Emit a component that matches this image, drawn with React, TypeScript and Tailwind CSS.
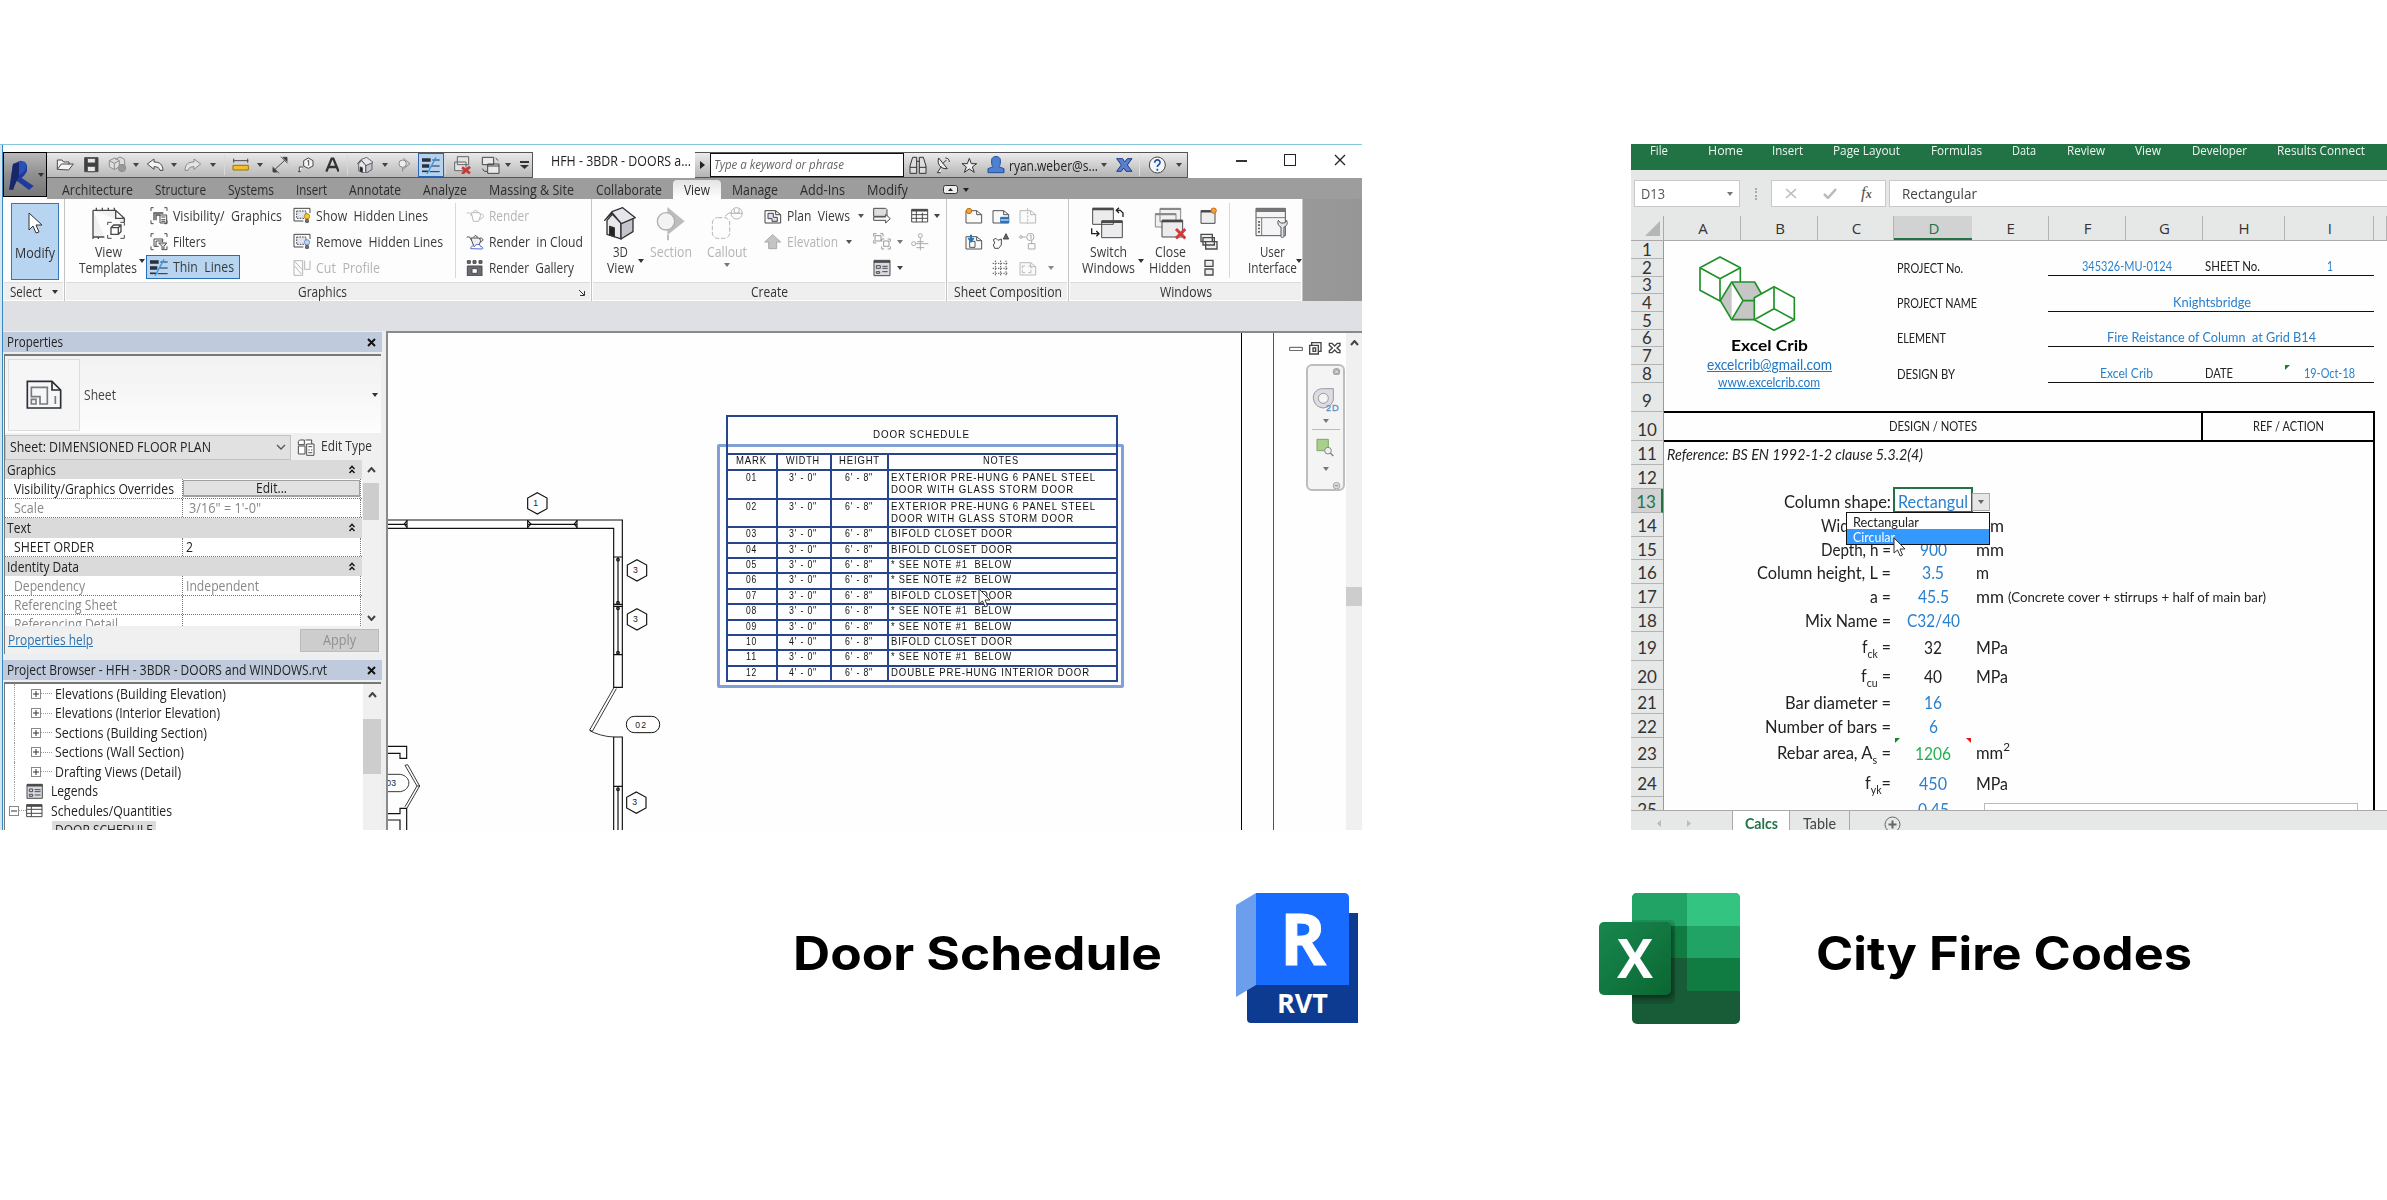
import React, { useLayoutEffect, useRef, useState } from "react";

type Kids = { children?: React.ReactNode };

/* Text stretched or condensed to a fixed width */
function Fit({ w, className = "", children }: { w: number; className?: string } & Kids) {
  const ref = useRef<HTMLSpanElement>(null);
  const [k, setK] = useState(1);
  useLayoutEffect(() => {
    if (ref.current) setK(w / ref.current.getBoundingClientRect().width);
  }, [w]);
  return (
    <span className={"inline-block shrink-0 whitespace-pre text-left " + className} style={{ width: w }}>
      <span ref={ref} className="inline-block origin-left" style={{ transform: k === 1 ? undefined : `scaleX(${k})` }}>
        {children}
      </span>
    </span>
  );
}

/* Icon drawn on a grid of three units per pixel */
function Ico({ x, y, w, h, s = "#4a4a4a", sw = 3, className = "", children }: { x: number; y: number; w: number; h: number; s?: string; sw?: number; className?: string } & Kids) {
  return (
    <svg className={"shrink-0 " + className} width={w / 3} height={h / 3} viewBox={`${x} ${y} ${w} ${h}`} fill="none" stroke={s} strokeWidth={sw}>
      {children}
    </svg>
  );
}

function Caret({ className = "text-[#444]" }: { className?: string }) {
  return (
    <svg className={"shrink-0 " + className} width="6" height="4" viewBox="0 0 6 4">
      <path d="M0 0h6L3 4z" fill="currentColor" />
    </svg>
  );
}

function Slot({ className, children }: { className: string } & Kids) {
  return <div className={"flex h-full shrink-0 items-center justify-center " + className}>{children}</div>;
}

const ThinIcon = () => (
  <Ico x={453} y={357} w={54} h={51}>
    <path d="M453 366h26M453 384h22" stroke="#2b2f3a" strokeWidth="10" />
    <path d="M453 400h18" stroke="#2b2f3a" strokeWidth="5" />
    <path d="M484 366h22M480 384h26M476 401h30" stroke="#2b2f3a" />
    <path d="M495 358L468 408" stroke="#3d94e0" strokeWidth="4" />
  </Ico>
);
const HouseIcon = ({ w = 48, h = 48 }) => (
  <svg className="shrink-0" width={w / 3} height={h / 3} viewBox="463 200 96 98" stroke="#333" strokeWidth="4" strokeLinejoin="round">
    <path d="M472 240v42l42 14v-48l-26-26z" fill="#e8e8ec" />
    <path d="M514 248l36-16v42l-36 22z" fill="#c4c4cc" />
    <path d="M465 240l22-26 32-12 38 30-42 18-27-32z" fill="#e4e6ec" />
    <path d="M480 258v26l14 5v-26z" fill="#222" />
  </svg>
);
const RedX = () => <path d="M1390 84l24 18M1414 82l-24 22" stroke="#c93838" strokeWidth="8" />;

function AppButton() {
  return (
    <div className="flex h-[45px] w-[44px] shrink-0 items-center border border-black bg-linear-to-b from-[#b9b9b9] via-[#8f8f8f] to-[#777]">
      <Ico x={24} y={46} w={76} h={90} s="none" className="ml-[5px]">
        <path d="M36 58l22-10 14 4 6 10v18l-8 12-8 8 36 24-14 12-40-30-8 32-12-2z" fill="#1f3a9a" />
        <path d="M36 58l18-4v40L36 134l-10-2z" fill="#16276b" />
        <path d="M54 50l18 2 4 14-6 14-16 12z" fill="#2a50bb" />
      </Ico>
      <Caret className="ml-[4px] text-[#333]" />
    </div>
  );
}

function QuickAccess() {
  return (
    <div className="flex h-[26px] w-[486px] shrink-0 items-center border-y border-r border-[#555] bg-linear-to-b from-[#e9e9e9] to-[#b9b9b9] pl-[4px]">
      <Slot className="w-[28px]">
        <Ico x={168} y={54} w={56} h={40}><path d="M172 88V60h14l5 6h16v8M172 88l12-16h36l-14 18z" fill="#f4f4f4" /></Ico>
      </Slot>
      <Slot className="w-[25px]">
        <Ico x={252} y={50} w={46} h={46}><path d="M254 52h40v42h-40z" fill="#3f3f3f" /><path d="M262 54h24v14h-24zM262 78h24v16h-24z" fill="#e8e8e8" /></Ico>
      </Slot>
      <Slot className="w-[26px]">
        <Ico x={324} y={48} w={56} h={52} s="#8d8d8d"><path d="M328 62l16-8 14 8v18l-15 9-15-9zM346 58l14-7 14 7v20M343 70v18M328 62l15 8 15-8" fill="#ddd" /><circle cx="366" cy="84" r="11" fill="#999" /></Ico>
      </Slot>
      <Slot className="w-[11px]"><Caret /></Slot>
      <Slot className="w-[28px]">
        <Ico x={440} y={52} w={54} h={40}><path d="M444 70l20-15v9c18 0 26 8 27 25h-9c-2-8-8-11-18-11v8z" fill="#f3f3f3" /></Ico>
      </Slot>
      <Slot className="w-[10px]"><Caret /></Slot>
      <Slot className="w-[28px]">
        <Ico x={556} y={52} w={54} h={40} s="#888"><path d="M606 70l-20-15v9c-18 0-26 8-27 25h9c2-8 8-11 18-11v8z" fill="#e4e4e4" /></Ico>
      </Slot>
      <Slot className="w-[12px]"><Caret /></Slot>
      <div className="mx-[5px] h-[20px] w-px shrink-0 bg-[#d8d8d8]" />
      <Slot className="w-[22px]">
        <Ico x={697} y={54} w={52} h={42}><path d="M700 62h46M702 56v12M744 56v12" /><path d="M700 76h46v14h-46z" fill="#f0c02c" stroke="#9a7400" /></Ico>
      </Slot>
      <Slot className="w-[16px]"><Caret /></Slot>
      <Slot className="w-[24px]">
        <Ico x={814} y={48} w={54} h={54}><path d="M822 92l36-34M818 80l20 20M844 50l20 20" /><path d="M820 96v-12l12 12zM862 52v12l-12-12z" fill="#333" /></Ico>
      </Slot>
      <Slot className="w-[28px]">
        <Ico x={896} y={50} w={48} h={48}><path d="M927 53l14 8v16l-14 7-14-7V61zM912 80h-12v14M896 94h8" fill="#f3f3f3" /><path d="M924 62l4-2v16" /></Ico>
      </Slot>
      <Slot className="w-[24px]">
        <Ico x={974} y={52} w={44} h={46}><path d="M978 96l16-39h5l16 39M984 82h24" strokeWidth="7" stroke="#333" /></Ico>
      </Slot>
      <div className="mx-[3px] h-[20px] w-px shrink-0 bg-[#d8d8d8]" />
      <Slot className="w-[28px]"><HouseIcon w={50} h={50} /></Slot>
      <Slot className="w-[11px]"><Caret /></Slot>
      <Slot className="w-[28px]">
        <Ico x={1186} y={52} w={48} h={46} s="#888"><circle cx="1206" cy="72" r="11" fill="#eee" /><path d="M1208 56l20 16-20 16M1206 84v12" /></Ico>
      </Slot>
      <div className="flex h-[24px] w-[26px] shrink-0 items-center justify-center border border-[#2a64b4] bg-[#b5d3f0]"><ThinIcon /></div>
      <div className="mx-px h-[20px] w-px shrink-0 bg-[#d8d8d8]" />
      <Slot className="w-[32px]">
        <Ico x={1366} y={50} w={54} h={54} s="#666"><path d="M1376 52h34v24h-34zM1368 68h34v26h-34z" fill="#e3e3e3" /><RedX /></Ico>
      </Slot>
      <Slot className="w-[23px]">
        <Ico x={1442} y={48} w={58} h={54} s="#444"><path d="M1446 52h34v22h-34zM1462 72h34v28h-34zM1462 78h34" fill="#e9e9e9" /><path d="M1486 54l8 8M1446 86l6 8h8" /></Ico>
      </Slot>
      <Slot className="w-[11px]"><Caret /></Slot>
      <Slot className="w-[22px]">
        <svg width="9" height="8" viewBox="0 0 9 8"><path d="M0 0h9v2H0zM0 4h9L4.500 8z" fill="#333" /></svg>
      </Slot>
    </div>
  );
}

function InfoCenter() {
  return (
    <div className="flex h-[26px] w-[493px] shrink-0 items-center border-y border-r border-[#555] bg-linear-to-b from-[#ececec] to-[#b3b3b3]">
      <Slot className="w-[15px]"><svg width="5" height="8" viewBox="0 0 5 8"><path d="M0 0l5 4-5 4z" fill="#222" /></svg></Slot>
      <div className="flex h-[24px] w-[194px] shrink-0 items-center border border-[#111] bg-white pl-[3px] text-[13px] italic text-[#666]">
        <Fit w={130}>Type a keyword or phrase</Fit>
      </div>
      <Slot className="w-[27px]">
        <Ico x={1374} y={50} w={54} h={54} s="#333"><path d="M1377 102V80l8-26h12v48zM1405 102V54h12l8 26v22zM1397 66h8M1377 84h20M1405 84h20" fill="#ddd" /></Ico>
      </Slot>
      <Slot className="w-[25px]">
        <Ico x={104} y={50} w={48} h={54} s="#333"><path d="M112 56c-6 18 6 34 26 32zM118 100h-10l12-18M125 72l10-10M132 56c8 0 12 5 12 12" fill="#eee" /></Ico>
      </Slot>
      <Slot className="w-[26px]">
        <Ico x={180} y={54} w={50} h={48} s="#333"><path d="M205 58l6 16h16l-13 10 6 16-15-10-15 10 6-16-13-10h16z" fill="#eee" /></Ico>
      </Slot>
      <Slot className="w-[27px]">
        <Ico x={258} y={50} w={54} h={52} s="#1f4fa0"><path d="M272 62c0-14 26-14 26 0v10c0 5-3 8-5 10l16 6v12h-48V88l16-6c-3-2-5-5-5-10z" fill="#4e82d0" /></Ico>
      </Slot>
      <Fit w={89} className="text-[14px] text-[#222]">ryan.weber@s...</Fit>
      <Slot className="w-[12px]"><Caret /></Slot>
      <Slot className="w-[29px]">
        <Ico x={648} y={56} w={50} h={42} s="#1d3b8c"><path d="M650 58h18l6 10 8-10h14l-14 19 14 19h-18l-7-10-7 10h-14l14-19z" fill="#5b80cb" /></Ico>
      </Slot>
      <div className="h-[22px] w-px bg-[#ddd]" />
      <Slot className="w-[35px]">
        <Ico x={758} y={50} w={56} h={54} s="#444"><circle cx="786" cy="77" r="24" fill="#f3f6fb" /><path d="M778 70c0-12 17-10 16 0-1 7-8 7-8 13M786 88v6" stroke="#23509f" strokeWidth="5" /></Ico>
      </Slot>
      <Slot className="w-[8px]"><Caret /></Slot>
    </div>
  );
}

const TABS: [string, number][] = [
  ["Architecture", 71], ["Structure", 51], ["Systems", 46], ["Insert", 31], ["Annotate", 52], ["Analyze", 44],
  ["Massing & Site", 85], ["Collaborate", 66], ["View", 26], ["Manage", 46], ["Add-Ins", 45], ["Modify", 41],
];

function TabRow() {
  return (
    <div className="flex h-[21px] items-end bg-[#9d9d9d] pl-[4px] text-[14px] text-[#2c2c2c]">
      {TABS.map(([t, w]) => (
        <div key={t} className={"flex h-[19px] items-center px-[11px] leading-[18px] " + (t === "View" ? "rounded-t-sm bg-linear-to-b from-[#e3e3e3] to-white" : "")}>
          <Fit w={w}>{t}</Fit>
        </div>
      ))}
      <div className="mb-[5px] ml-[24px] flex items-center gap-[5px]">
        <svg width="15" height="9" viewBox="0 0 15 9"><rect x=".5" y=".5" width="14" height="8" rx="2" fill="#eee" stroke="#333" /><path d="M5 6l2.500-3L10 6z" fill="#222" /></svg>
        <Caret className="text-[#222]" />
      </div>
    </div>
  );
}

function Panel({ label, lw, className, shift = "", note, children }: { label: string; lw: number; className: string; shift?: string; note?: React.ReactNode } & Kids) {
  return (
    <div className={"flex h-[102px] shrink-0 flex-col border-r border-[#c4c4c4] bg-[#fdfdfd] " + className}>
      <div className="flex h-[83px]">{children}</div>
      <div className={"relative mx-px flex h-[18px] items-center justify-center border-t border-[#dcdcdc] bg-[#efefef] text-[14px] leading-[16px] text-[#333] " + shift}>
        <Fit w={lw}>{label}</Fit>
        {note}
      </div>
    </div>
  );
}

function Big({ icon, lines, className, dim }: { icon: React.ReactNode; lines: [string, number][]; className: string; dim?: boolean }) {
  return (
    <div className={"flex shrink-0 flex-col items-center pt-[8px] text-[14px] leading-[16px] " + className + (dim ? " text-[#b4b4b4]" : " text-[#3a3a3a]")}>
      <div className="flex h-[37px] items-start">{icon}</div>
      {lines.map(([t, w]) => <Fit key={t} w={w} className="h-[16px]">{t}</Fit>)}
    </div>
  );
}

function Cmd({ icon, text, w, dim, caret, className = "" }: { icon: React.ReactNode; text: string; w: number; dim?: boolean; caret?: boolean; className?: string }) {
  return (
    <div className={"flex h-[26px] items-center text-[14px] leading-[20px] " + className + (dim ? " text-[#b4b4b4]" : " text-[#3a3a3a]")}>
      <span className="flex w-[23px] shrink-0 items-center">{icon}</span>
      <Fit w={w}>{text}</Fit>
      {caret && <Caret className="ml-[8px] text-[#555]" />}
    </div>
  );
}

const Corners = ({ y }: { y: number }) => <path d={`M455 ${y + 12}v-10h8M495 ${y + 2}h8v10M503 ${y + 40}v10h-8M463 ${y + 50}h-8v-10`} />;
const Lamp = ({ y, fill }: { y: number; fill: string }) => (
  <g>
    <path d={`M882 ${y + 4}h48v14M882 ${y + 4}v38h28`} stroke="#444" />
    <path d={`M890 ${y + 12}h28v22h-28z`} strokeDasharray="5 3" fill="#dfe4f2" />
    <circle cx="921" cy={y + 28} r="8" fill={fill} stroke={fill === "#f5c83a" ? "#b98a00" : "#7894b8"} />
    <path d={`M917 ${y + 38}h8v8h-8z`} fill="#888" />
  </g>
);
const Teapot = ({ y, s }: { y: number; s: string }) => (
  <Ico x={1398} y={y} w={54} h={50} s={s}><path d={`M1400 ${y + 16}c6-4 12 0 14 8M1414 ${y + 14}h24l4 8-6 18h-16zM1420 ${y + 12}l6-6 8 6M1440 ${y + 18}c16 0 12 14-2 16`} fill="#fff" /></Ico>
);
const Page = ({ s = "#555", children }: { s?: string } & Kids) => (
  <Ico x={0} y={0} w={54} h={48} s={s}><path d="M3 8h32l15 12v25H3zM35 8v12h15" fill="#fafafa" />{children}</Ico>
);

function Ribbon() {
  return (
    <div className="flex h-[102px] bg-linear-to-r from-[#d2d2d2] to-[#969696]">
      <Panel label="Select  " lw={38} className="w-[62px]" note={<Caret className="ml-[4px] text-[#333]" />}>
        <div className="ml-[8px] mt-[4px] flex h-[77px] w-[48px] shrink-0 flex-col items-center border border-[#3a74b8] bg-[#b7d5f1] text-[14px] text-[#333]">
          <svg className="mt-[8px]" width="14" height="23" viewBox="0 0 14 23"><path d="M1 1v17l4-4 3 7 3-1-3-7h6z" fill="#fff" stroke="#333" /></svg>
          <Fit w={40} className="mt-[7px]">Modify</Fit>
        </div>
      </Panel>
      <Panel label="Graphics" lw={49} className="w-[527px]" shift="pr-[11px]" note={<svg className="absolute right-[5px] top-[7px]" width="6" height="6" viewBox="0 0 6 6"><path d="M0 0l5 5M5.500 1v4.500H1" stroke="#333" fill="none" /></svg>}>
        <Big className="ml-[4px] w-[78px]" lines={[["View", 27], ["Templates", 58]]} icon={
          <Ico x={268} y={200} w={104} h={98}>
            <path d="M274 210h68l26 24v12M342 210v24h26M274 210v80h34M284 202v8M302 202v8M320 202v8M338 202v8M274 290v6M290 290v6" fill="#f0f0f2" strokeWidth="4" />
            <path d="M318 254v-8h12M356 246h12v10M368 284v10h-12M330 294h-12v-10" />
            <path d="M328 262l8-8h22v20l-8 8h-22zM328 262h22v20M350 262l8-8" fill="#fff" strokeWidth="4" />
          </Ico>} />
        <Caret className="-ml-[8px] mt-[60px] text-[#333]" />
        <div className="flex w-[143px] shrink-0 flex-col pt-[4px]">
          <Cmd className="pl-[5px]" text="Visibility/  Graphics" w={109} icon={<Ico x={452} y={200} w={54} h={52}><Corners y={200} /><path d="M464 240v-22h28M470 240v-16h12" strokeWidth="4" /><path d="M482 224h20v24h-20zM486 230h12M486 238h12M486 243h12" fill="#fff" /></Ico>} />
          <Cmd className="pl-[5px]" text="Filters" w={33} icon={<Ico x={452} y={278} w={54} h={52}><Corners y={278} /><path d="M464 318v-22h26v10M470 318v-16h20M464 318h14" /><path d="M478 308h24l-8 10v10h-6v-10z" fill="#ddd" /></Ico>} />
          <div className="ml-px h-[24px] w-[94px] border border-[#2a6cb5] bg-[#b7d5f1]">
            <Cmd className="-mt-[2px] pl-[3px]" text="Thin  Lines" w={61} icon={<ThinIcon />} />
          </div>
        </div>
        <div className="flex w-[167px] shrink-0 flex-col pl-[5px] pt-[4px]">
          <Cmd text="Show  Hidden Lines" w={112} icon={<Ico x={879} y={201} w={56} h={52}><Lamp y={201} fill="#f5c83a" /></Ico>} />
          <Cmd text="Remove  Hidden Lines" w={127} icon={<Ico x={879} y={201} w={56} h={52}><Lamp y={201} fill="#b9d8f4" /></Ico>} />
          <Cmd dim text="Cut  Profile" w={64} icon={<Ico x={879} y={355} w={56} h={52} s="#b5b5b5"><path d="M882 360h26v44h-26zM884 362l22 24M884 376l20 24M914 360v26h16v-26" /></Ico>} />
        </div>
        <div className="mt-[4px] h-[75px] w-px shrink-0 bg-[#d8d8d8]" />
        <div className="flex flex-col pl-[10px] pt-[4px]">
          <Cmd dim text="Render" w={40} icon={<Teapot y={205} s="#b9b9b9" />} />
          <Cmd text="Render  in Cloud" w={94} icon={<Ico x={1398} y={282} w={54} h={50}><path d="M1400 292c6-4 12 0 14 8M1412 294h26l4 8-6 18h-14zM1420 292l6-6 8 6M1440 294c12 0 10 10 2 12" fill="#eee" /><path d="M1412 326c0-9 10-10 12-6 2-10 18-8 18 0 8 0 8 7 4 7z" stroke="#5567c0" fill="#fff" /></Ico>} />
          <Cmd text="Render  Gallery" w={85} icon={<Ico x={1398} y={356} w={54} h={50}><path d="M1402 358h9v8h-9zM1419 358h9v8h-9zM1437 358h9v8h-9zM1402 374h44v30h-44z" fill="#6a6a72" /><path d="M1416 382h16v14h-16z" fill="#fff" /></Ico>} />
        </div>
      </Panel>
      <Panel label="Create" lw={37} className="w-[355px]">
        <Big className="ml-[6px] w-[44px]" lines={[["3D", 15], ["View", 27]]} icon={<HouseIcon w={96} h={98} />} />
        <Caret className="-ml-[4px] mt-[60px] text-[#333]" />
        <Big dim className="ml-[2px] w-[50px]" lines={[["Section", 42]]} icon={<Ico x={620} y={200} w={90} h={102} s="#b0b0b0"><path d="M654 200l52 43-52 42z" fill="#bdbdbd" stroke="none" /><circle cx="650" cy="243" r="26" fill="#f3f3f3" strokeWidth="4" /><path d="M656 284v16" strokeWidth="5" /></Ico>} />
        <div className="ml-[7px] flex flex-col items-center">
          <Big dim className="w-[48px]" lines={[["Callout", 40]]} icon={<Ico x={782} y={200} w={98} h={98} s="#b5b5b5"><rect x="786" y="232" width="52" height="62" rx="16" strokeDasharray="14 5" /><path d="M824 228l12-10h8" /><circle cx="859" cy="219" r="17" /><path d="M842 219h34M852 206v12h14v-12" /></Ico>} />
          <Caret className="mt-[3px] text-[#777]" />
        </div>
        <div className="ml-[13px] flex flex-col pt-[4px]">
          <Cmd text="Plan  Views" w={63} caret icon={<Page s="#444"><path d="M12 16h16v12h12v12H24v-8H12z" fill="#dde" /></Page>} />
          <Cmd dim text="Elevation" w={51} caret icon={<Ico x={944} y={282} w={54} h={48} s="#aaa"><path d="M970 284l24 22h-12v20h-24v-20h-12z" fill="#c4c4c4" /></Ico>} />
        </div>
        <div className="ml-[9px] flex w-[38px] flex-col pt-[4px]">
          <div className="flex h-[26px] items-center"><Ico x={1270} y={200} w={56} h={52}><path d="M1272 204h36l4 4v20h-40z" fill="#ddd" /><path d="M1272 230h36v-8l14 13-14 13v-8h-36z" fill="#f8f8f8" /></Ico></div>
          <div className="flex h-[26px] items-center gap-[5px]"><Ico x={1270} y={278} w={56} h={52} s="#999"><path d="M1272 288v-8h8M1292 280h8v8M1272 300v8h8M1276 286h18v16h-18zM1302 302h16v16h-16zM1296 304v-8h8M1314 296h8v8M1322 318v8h-8M1304 326h-8v-8" /></Ico><Caret className="text-[#777]" /></div>
          <div className="flex h-[26px] items-center gap-[5px]"><Ico x={1270} y={356} w={56} h={52}><path d="M1273 360h48v46h-48z" fill="#d8dae2" /><path d="M1273 364h48" strokeWidth="7" /><path d="M1280 376h12v8h-12zM1298 378h16M1298 384h16M1280 394h10v5h-10zM1298 394h16" /></Ico><Caret /></div>
        </div>
        <div className="flex flex-col pt-[4px]">
          <div className="flex h-[26px] items-center gap-[5px]"><Ico x={1384} y={204} w={54} h={46}><path d="M1386 208h48v38h-48z" fill="#fff" /><path d="M1386 211h48" strokeWidth="7" /><path d="M1400 208v38M1418 218v28M1386 224h48M1386 235h48" /></Ico><Caret /></div>
          <div className="flex h-[26px] items-center"><Ico x={1384} y={278} w={54} h={54} s="#aaa"><circle cx="1412" cy="286" r="6" /><circle cx="1392" cy="310" r="6" /><path d="M1412 292v38M1398 310h38M1402 304h20M1400 322h24" /></Ico></div>
        </div>
      </Panel>
      <Panel label="Sheet Composition" lw={108} className="w-[122px]">
        <div className="ml-[13px] grid h-[82px] grid-cols-[27px_27px_27px_20px] grid-rows-[26px_26px_26px] place-items-center pt-[4px]">
          <Page><circle cx="12" cy="9" r="8" fill="#f2a33c" stroke="#c87010" /></Page>
          <Page><path d="M26 28h24v16H26z" fill="#2a72b8" stroke="#2a72b8" /><path d="M26 36h24" stroke="#fff" /></Page>
          <Page s="#bbb"><path d="M26 0v48" strokeDasharray="7 4" /></Page>
          <span />
          <Page><path d="M14 22h16v18H14z" fill="#fff" /><path d="M18 2v18M10 12l8 10 8-10" stroke="#2277c0" strokeWidth="6" /></Page>
          <Ico x={0} y={0} w={54} h={52}><path d="M4 20l8-4 6 6 10-4v18l-8 10H8l-4-10 4-6z" /><path d="M34 18l8-16 8 16z" fill="#666" /></Ico>
          <Ico x={0} y={0} w={54} h={52} s="#aaa"><circle cx="6" cy="12" r="4" /><path d="M10 12h10" /><circle cx="34" cy="12" r="11" /><path d="M32 8l4-2v14M28 32h20v16H28zM38 24v8" /></Ico>
          <span />
          <span />
          <Ico x={0} y={0} w={54} h={50}><path d="M10 2v46M26 2v46M42 2v46M2 10h48M2 25h48M2 40h48" strokeDasharray="4 4" /></Ico>
          <Page s="#bbb"><path d="M10 26v-8h8M28 18h8v8M36 30v8h-8M18 38h-8v-8" /></Page>
          <Caret className="text-[#888]" />
        </div>
      </Panel>
      <Panel label="Windows" lw={52} className="w-[234px]">
        <Big className="ml-[9px] w-[60px]" lines={[["Switch", 37], ["Windows", 53]]} icon={<Ico x={572} y={200} w={100} h={96}><path d="M577 204h62v48h-62zM604 242h62v50h-62z" fill="#ececee" /><path d="M577 206h62M604 244h62" strokeWidth="8" /><path d="M648 210h12l8 8v12M656 202l-8 8 8 8M574 264v16h20M588 272l8 8-8 8" stroke="#222" strokeWidth="4" /></Ico>} />
        <Caret className="mt-[60px] text-[#333]" />
        <Big className="ml-[2px] w-[48px]" lines={[["Close", 31], ["Hidden", 42]]} icon={<Ico x={758} y={200} w={98} h={98}><path d="M776 204h62v40h-62zM762 220h62v40h-62z" fill="#f0f0f0" stroke="#888" /><path d="M782 240h62v50h-62z" fill="#ececee" /><path d="M776 206h62M762 222h62" strokeWidth="6" stroke="#888" /><path d="M782 242h62" strokeWidth="8" /><path d="M824 266l28 28M852 266l-28 28" stroke="#d23c3c" strokeWidth="9" /></Ico>} />
        <div className="ml-[6px] mt-[4px] flex w-[30px] flex-col">
          <div className="flex h-[26px] items-center"><Ico x={893} y={203} w={54} h={54}><path d="M896 214h42v38h-42z" fill="#eee" /><path d="M896 216h42" strokeWidth="7" /><circle cx="934" cy="214" r="8" fill="#f2a33c" stroke="#c87010" /></Ico></div>
          <div className="flex h-[26px] items-center"><Ico x={893} y={284} w={54} h={52}><path d="M896 288h34v22h-34zM902 298h34v22h-34zM910 310h34v22h-34z" fill="#eee" strokeWidth="4" /></Ico></div>
          <div className="flex h-[26px] items-center"><Ico x={893} y={358} w={54} h={52}><path d="M908 362h24v18h-24zM908 388h24v18h-24z" fill="#eee" strokeWidth="4" /></Ico></div>
        </div>
        <div className="mt-[4px] h-[75px] w-px shrink-0 bg-[#d8d8d8]" />
        <Big className="ml-[14px] w-[56px]" lines={[["User", 25], ["Interface", 49]]} icon={<Ico x={1048} y={202} w={100} h={94}><path d="M1051 206h88v82h-88z" fill="#f4f4f6" stroke="#555" /><path d="M1051 212h88" strokeWidth="10" stroke="#777" /><path d="M1051 234h88M1068 234v54" stroke="#777" /><path d="M1060 244v40" strokeDasharray="5 5" strokeWidth="5" /><path d="M1118 242c-4 12 2 18 8 20v28c0 5 9 5 9 0v-28c8-2 12-10 8-20l-6 8h-12z" fill="#dfe3ea" stroke="#555" /></Ico>} />
        <Caret className="-ml-[4px] mt-[60px] text-[#333]" />
      </Panel>
    </div>
  );
}

function Chev() {
  return <svg className="mr-[7px]" width="6" height="9" viewBox="0 0 6 9" fill="none" stroke="#111" strokeWidth="1.400"><path d="M.5 4L3 1.200 5.500 4M.5 8L3 5.200 5.500 8" /></svg>;
}
function Group({ name, w }: { name: string; w: number }) {
  return <div className="flex h-[19.400px] shrink-0 items-center justify-between bg-[#dadada] pl-[2px] text-[#222]"><Fit w={w}>{name}</Fit><Chev /></div>;
}
function Prop({ name, w, dim, children }: { name: string; w: number; dim?: boolean } & Kids) {
  return (
    <div className={"flex h-[19.400px] shrink-0 items-center border-b border-dotted border-[#777] bg-white " + (dim ? "text-[#888]" : "text-[#222]")}>
      <div className="flex h-full w-[178px] shrink-0 items-center border-r border-dotted border-[#777] pl-[9px]"><Fit w={w}>{name}</Fit></div>
      <div className="flex h-full w-[178px] items-center border-r border-dotted border-[#777]">{children}</div>
    </div>
  );
}
function CloseX({ className = "" }: { className?: string }) {
  return <svg className={className} width="9" height="9" viewBox="0 0 9 9" stroke="#111" strokeWidth="2"><path d="M1 1l7 7M8 1L1 8" /></svg>;
}
function Up({ down }: { down?: boolean }) {
  return <svg className={down ? "rotate-180" : ""} width="9" height="6" viewBox="0 0 9 6" fill="none" stroke="#444" strokeWidth="2"><path d="M1 5l3.500-4L8 5" /></svg>;
}

const TREE: [string, number][] = [
  ["Elevations (Building Elevation)", 171], ["Elevations (Interior Elevation)", 165], ["Sections (Building Section)", 152],
  ["Sections (Wall Section)", 129], ["Drafting Views (Detail)", 126],
];

function LeftDock() {
  return (
    <div className="flex h-[499px] w-[379px] shrink-0 flex-col pt-px text-[14px] leading-[18px]">
      <div className="flex h-[20px] shrink-0 items-center justify-between bg-[#bfcbdc] pl-[4px] pr-[6px] text-[#222]"><Fit w={56}>Properties</Fit><CloseX /></div>
      <div className="mx-[1px] mt-[2px] flex h-[300px] shrink-0 flex-col border-l border-t-2 border-[#777] bg-[#f0f0f0]">
        <div className="flex h-[77px] shrink-0 items-center justify-between bg-linear-to-b from-[#f1f1f1] to-[#fdfdfd] pl-[3px] pr-[3px]">
          <div className="flex items-center gap-[4px] text-[#444]">
            <div className="flex size-[72px] items-center justify-center border border-[#ddd] bg-[#f6f6f6]">
              <Ico x={78} y={160} w={108} h={88} s="#2b2f38"><path d="M82 164h74l26 26v54H82z" fill="#f7f7f7" strokeWidth="5" /><path d="M156 164v26h26" strokeWidth="5" /><path d="M94 182h48v50h-22v-22H94zM94 218h14v14H94zM166 208v24" strokeWidth="5" stroke="#777b84" /></Ico>
            </div>
            <Fit w={32}>Sheet</Fit>
          </div>
          <Caret className="text-[#333]" />
        </div>
        <div className="flex h-[27px] shrink-0 items-center pt-px">
          <div className="flex h-[25px] w-[286px] shrink-0 items-center justify-between border border-[#c2c2c2] bg-[#e1e1e1] pl-[4px] pr-[4px] text-[#222]">
            <Fit w={201}>Sheet: DIMENSIONED FLOOR PLAN</Fit>
            <svg width="10" height="6" viewBox="0 0 10 6" fill="none" stroke="#555" strokeWidth="1.300"><path d="M1 1l4 4 4-4" /></svg>
          </div>
          <Ico x={892} y={332} w={56} h={56} className="ml-[6px] mr-[5px]"><path d="M900 338h14v14h-18v-10zM918 338h18v14h-18M896 356h20v24h-20z" fill="#fff" /><path d="M921 350h22v34h-22zM926 358h12M926 368h4M934 368h4M926 376h12" fill="#fff" /></Ico>
          <Fit w={51} className="mb-[3px] text-[#333]">Edit Type</Fit>
        </div>
        <div className="flex h-[166px] shrink-0">
          <div className="flex w-[357px] shrink-0 flex-col overflow-hidden">
            <Group name="Graphics" w={49} />
            <Prop name="Visibility/Graphics Overrides" w={160}><div className="flex h-[17px] w-full items-center justify-center border border-b-2 border-[#a0a0a0] bg-[#e1e1e1]"><Fit w={31}>Edit...</Fit></div></Prop>
            <Prop name="Scale" w={30} dim><Fit w={72} className="ml-[6px]">3/16" = 1'-0"</Fit></Prop>
            <Group name="Text" w={24} />
            <Prop name="SHEET ORDER" w={80}><Fit w={7} className="ml-[3px]">2</Fit></Prop>
            <Group name="Identity Data" w={72} />
            <Prop name="Dependency" w={71} dim><Fit w={73} className="ml-[3px]">Independent</Fit></Prop>
            <Prop name="Referencing Sheet" w={103} dim />
            <Prop name="Referencing Detail" w={104} dim />
          </div>
          <div className="flex w-[18px] flex-col items-center justify-between pb-[5px] pt-[7px]">
            <Up />
            <div className="mb-[86px] h-[37px] w-[16px] bg-[#cdcdcd]" />
            <Up down />
          </div>
        </div>
        <div className="flex h-[28px] items-center justify-between pl-[3px] pr-[2px]">
          <Fit w={85} className="text-[#2a72b0] [&>span]:underline">Properties help</Fit>
          <div className="flex h-[23px] w-[79px] items-center justify-center border border-[#bbb] bg-[#cdcdcd] text-[#909090]"><Fit w={33}>Apply</Fit></div>
        </div>
      </div>
      <div className="mt-[6px] flex h-[20px] shrink-0 items-center justify-between bg-[#bfcbdc] pl-[4px] pr-[6px] text-[#222]"><Fit w={320}>Project Browser - HFH - 3BDR - DOORS and WINDOWS.rvt</Fit><CloseX /></div>
      <div className="mx-[1px] mt-[2px] flex flex-1 overflow-hidden border-l border-t-2 border-[#777] bg-white">
        <div className="flex w-[358px] shrink-0 flex-col text-[#222]">
          {TREE.map(([t, w]) => (
            <div key={t} className="flex h-[19.500px] shrink-0 items-center">
              <div className="ml-[9px] h-full w-[17px] border-l border-dotted border-[#999]" />
              <svg width="10" height="10" viewBox="0 0 10 10" fill="#fff" stroke="#888"><rect x=".5" y=".5" width="9" height="9" /><path d="M2 5h6M5 2v6" stroke="#333" /></svg>
              <div className="mr-[3px] w-[11px] border-t border-dotted border-[#999]" />
              <Fit w={w}>{t}</Fit>
            </div>
          ))}
          <div className="flex h-[19.500px] shrink-0 items-center">
            <div className="ml-[9px] h-full w-[12px] border-l border-dotted border-[#999]" />
            <Ico x={80} y={622} w={54} h={50} className="mr-[7px]"><path d="M83 626h46v42H83z" fill="#d8dae2" /><path d="M83 629h46" strokeWidth="7" /><path d="M90 640h10v8H90zM106 642h18M106 648h18M90 656h10v6H90zM106 658h18" /></Ico>
            <Fit w={47}>Legends</Fit>
          </div>
          <div className="flex h-[19.500px] shrink-0 items-center">
            <svg className="ml-[4px]" width="10" height="10" viewBox="0 0 10 10" fill="#fff" stroke="#888"><rect x=".5" y=".5" width="9" height="9" /><path d="M2 5h6" stroke="#333" /></svg>
            <div className="w-[7px] border-t border-dotted border-[#999]" />
            <Ico x={1384} y={206} w={54} h={42} className="mr-[7px]"><path d="M1386 208h46v36h-46z" fill="#fff" /><path d="M1386 211h46" strokeWidth="7" /><path d="M1400 208v36M1386 222h46M1386 234h46" /></Ico>
            <Fit w={121}>Schedules/Quantities</Fit>
          </div>
          <div className="flex h-[19.500px] shrink-0 items-center pl-[30px]">
            <div className="ml-[17px] flex h-[18px] items-center bg-[#dcdcdc] px-[3px]"><Fit w={98}>DOOR SCHEDULE</Fit></div>
          </div>
        </div>
        <div className="flex flex-1 flex-col items-center bg-[#f0f0f0] pt-[8px]"><Up /><div className="mt-[21px] h-[55px] w-full bg-[#cdcdcd]" /></div>
      </div>
    </div>
  );
}

function FloorPlan() {
  const Tag = ({ x, y, n }: { x: number; y: number; n: string }) => (
    <g>
      <path d={`M${x} ${y - 32}l29 16v32l-29 16-29-16v-32z`} />
      <text x={x - 12} y={y + 8} fontSize="26" fill="#222" stroke="none" fontFamily="Liberation Sans">{n}</text>
    </g>
  );
  return (
    <svg className="absolute -left-[3px] top-[127px]" width="310" height="370" viewBox="0 0 930 1110" fill="none" stroke="#111" strokeWidth="3.500">
      <path d="M8 180H712V682H686V205H8M8 193H66M66 180v25M428 180v25M576 180v25M430 193h146" />
      <path d="M428 182l10 10-10 10M576 182l-8 10 8 10M66 182l-8 10 8 10" />
      <path d="M686 291h26M686 433h26M686 439h26M686 584h26M699 291V433M699 439V584" />
      <circle cx="699" cy="299" r="4" /><circle cx="699" cy="428" r="4" /><circle cx="699" cy="445" r="4" /><circle cx="699" cy="578" r="4" />
      <path d="M686 1110V831H712V1110M686 979h26M699 979V1110" /><circle cx="699" cy="988" r="4" />
      <path d="M686 684L614 810l8 4L694 686M614 812c20 10 44 18 72 19" strokeWidth="2.500" />
      <Tag x={457} y={130} n="1" />
      <Tag x={756} y={331} n="3" />
      <Tag x={756} y={478} n="3" />
      <Tag x={754} y={1028} n="3" />
      <rect x="724" y="769" width="100" height="49" rx="24" strokeWidth="3" />
      <text x="751" y="803" fontSize="26" textLength="32" fill="#222" stroke="none" fontFamily="Liberation Sans">02</text>
      <path d="M8 859H65V895H45V880H8M8 1061H45V1045H65V1110M8 1080H45V1110" />
      <path d="M60 916l36 62M68 914l36 64-38 66M60 916l8-2M96 978L60 1040M96 978h8" strokeWidth="2.500" />
      <path d="M8 943h38c34 6 34 46 0 52H8" strokeWidth="2.500" />
      <text x="4" y="977" fontSize="26" fill="#222" stroke="none" fontFamily="Liberation Sans">03</text>
    </svg>
  );
}

const EXT: [string, number][] = [["EXTERIOR PRE-HUNG 6 PANEL STEEL", 205], ["DOOR WITH GLASS STORM DOOR", 183]];
const BIF: [string, number][] = [["BIFOLD CLOSET DOOR", 122]];
const N1: [string, number][] = [["* SEE NOTE #1  BELOW", 121]];
const N2: [string, number][] = [["* SEE NOTE #2  BELOW", 121]];
const DOORS: [string, string, [string, number][]][] = [
  ["01", "3' - 0\"", EXT], ["02", "3' - 0\"", EXT], ["03", "3' - 0\"", BIF], ["04", "3' - 0\"", BIF], ["05", "3' - 0\"", N1], ["06", "3' - 0\"", N2],
  ["07", "3' - 0\"", BIF], ["08", "3' - 0\"", N1], ["09", "3' - 0\"", N1], ["10", "4' - 0\"", BIF], ["11", "3' - 0\"", N1],
  ["12", "4' - 0\"", [["DOUBLE PRE-HUNG INTERIOR DOOR", 199]]],
];

function DoorSchedule() {
  return (
    <>
      <div className="absolute left-[329px] top-[111px] h-[244px] w-[407px] rounded-xs border-3 border-[#829fd6]" />
      <div className="absolute left-[338px] top-[82px] w-[392px] border-2 border-[#27458c] font-['Liberation_Sans',sans-serif] text-[11px] leading-[10px] tracking-[1px] text-[#111]">
        <div className="flex h-[36px] items-center justify-center pb-[3px]"><Fit w={97} className="-ml-[2px]">DOOR SCHEDULE</Fit></div>
        <div className="grid h-[16px] grid-cols-[50px_54px_57px_227px] items-stretch border-t-2 border-[#27458c] text-center">
          <div className="flex justify-center border-r-2 border-[#27458c] pr-[2px]"><Fit w={31}>MARK</Fit></div>
          <div className="flex justify-center border-r-2 border-[#27458c] pr-[3px]"><Fit w={34}>WIDTH</Fit></div>
          <div className="flex justify-center border-r-2 border-[#27458c] pr-[1px]"><Fit w={41}>HEIGHT</Fit></div>
          <div className="flex justify-center pr-[4px]"><Fit w={36}>NOTES</Fit></div>
        </div>
        {DOORS.map(([m, wd, notes]) => (
          <div key={m} className={"grid grid-cols-[50px_54px_57px_227px] border-t-2 border-[#27458c] text-center " + (notes.length > 1 ? "h-[28.600px] pt-px" : "h-[15.400px]")}>
            <div className="-mt-px flex justify-center border-r-2 border-[#27458c] pr-[2px] pt-px"><Fit w={11}>{m}</Fit></div>
            <div className="-mt-px flex justify-center border-r-2 border-[#27458c] pr-[2px] pt-px"><Fit w={28}>{wd}</Fit></div>
            <div className="-mt-px flex justify-center border-r-2 border-[#27458c] pr-[1px] pt-px"><Fit w={28}>{"6' - 8\""}</Fit></div>
            <div className="-mt-px flex flex-col items-start pl-[2px] leading-[12px]">{notes.map(([t, w]) => <Fit key={t} w={w}>{t}</Fit>)}</div>
          </div>
        ))}
      </div>
      <Cursor className="absolute left-[590px] top-[255px]" />
    </>
  );
}

function Cursor({ className = "" }: { className?: string }) {
  return <svg className={className} width="13" height="20" viewBox="0 0 13 20"><path d="M1 1v15l3.500-3 2.700 6 2.300-1-2.500-6H12z" fill="#fff" stroke="#333" /></svg>;
}

function Canvas() {
  return (
    <div className="relative flex h-[497px] flex-1 overflow-hidden bg-[#fefefe]">
      <FloorPlan />
      <DoorSchedule />
      <div className="absolute left-[853px] top-0 h-full w-[33px] border-l border-r border-l-black border-r-[#555]" />
      <div className="absolute left-[901px] top-[9px] flex items-center gap-[6px]">
        <Ico x={268} y={84} w={42} h={16} s="#555"><path d="M270 88h38v10h-38z" /></Ico>
        <Ico x={326} y={66} w={38} h={38} s="#444"><path d="M334 76v-8h28v26h-8M328 76h26v26h-26zM338 84h8v10h-8z" strokeWidth="4" /></Ico>
        <Ico x={384} y={68} w={40} h={36} s="#444"><path d="M388 72h8l8 8 8-8h8v6l-9 8 9 8v6h-8l-8-8-8 8h-8v-6l9-8-9-8z" strokeWidth="4" /></Ico>
      </div>
      <div className="absolute left-[918px] top-[31px] flex h-[127px] w-[39px] flex-col items-center rounded-md border-2 border-[#bdbdbd] bg-[#f4f4f4]">
        <svg className="ml-[22px] mt-[2px]" width="9" height="9" viewBox="0 0 9 9"><circle cx="4.500" cy="4.500" r="4.500" fill="#aaa" /><path d="M3 3l3 3M6 3L3 6" stroke="#fff" /></svg>
        <Ico x={334} y={202} w={82} h={74} s="#999" className="mt-[13px]"><path d="M338 232c0-18 12-28 30-28h30v34c-4 14-14 22-30 24-18-2-28-12-30-30z" fill="#dcdce4" /><circle cx="368" cy="233" r="15" fill="#f4f4f4" /><text x="376" y="272" fontSize="28" textLength="38" fill="#5a94c8" stroke="#5a94c8" strokeWidth="1" fontFamily="Liberation Sans">2D</text></Ico>
        <Caret className="mt-[6px] text-[#777]" />
        <div className="mt-[6px] h-px w-[28px] bg-[#bbb]" />
        <Ico x={348} y={346} w={56} h={56} s="#888" className="mt-[8px]"><path d="M351 350h34v34h-34z" fill="#a8d08c" stroke="#7aa860" /><circle cx="384" cy="384" r="10" fill="#eee" /><path d="M391 391l9 9" strokeWidth="5" /></Ico>
        <Caret className="mt-[10px] text-[#777]" />
        <svg className="ml-[22px] mt-[11px]" width="9" height="9" viewBox="0 0 9 9"><circle cx="4.500" cy="4.500" r="4" fill="#ddd" stroke="#999" /><path d="M2.500 4.500h4" stroke="#777" /></svg>
      </div>
      <div className="ml-auto flex w-[16px] flex-col items-center bg-[#f0f0f0] pt-[7px]"><Up /><div className="mt-[241px] h-[19px] w-full bg-[#cdcdcd]" /></div>
    </div>
  );
}

function Revit() {
  return (
    <section className="flex h-[686px] w-[1362px] shrink-0 overflow-hidden border-t border-[#86c6dc] font-['Open_Sans',sans-serif]">
      <div className="w-[3px] shrink-0 border-r border-[#3a86c0] bg-[#d5e6ee]" />
      <div className="flex w-[1359px] flex-col">
        <div className="flex h-[54px]">
          <div className="pt-[7px]"><div className="relative z-10"><AppButton /></div></div>
          <div className="flex flex-1 flex-col">
            <div className="flex h-[33px] items-start pt-[7px]">
              <QuickAccess />
              <Fit w={140} className="ml-[18px] text-[14px] leading-[18px] text-[#222]">HFH - 3BDR - DOORS a...</Fit>
              <div className="w-[4px]" />
              <InfoCenter />
              <div className="ml-[48px] mt-[8px] h-[2px] w-[11px] bg-[#333]" />
              <div className="ml-[37px] mt-[2px] size-[12px] border-[1.500px] border-[#222]" />
              <svg className="ml-[38px] mt-[2px]" width="12" height="12" viewBox="0 0 12 12" stroke="#222" strokeWidth="1.300"><path d="M1 1l10 10M11 1L1 11" /></svg>
            </div>
            <TabRow />
          </div>
        </div>
        <Ribbon />
        <div className="h-[30px] shrink-0 bg-[#dfe0e4]" />
        <div className="flex h-[499px] bg-[#eceef0]">
          <LeftDock />
          <div className="w-[4px] bg-[#eceef0]" />
          <div className="flex flex-1 flex-col border-l-2 border-t-2 border-[#8a8a8a]"><Canvas /></div>
        </div>
      </div>
    </section>
  );
}

/* ---------- spreadsheet ---------- */

const XTABS: [string, number, string][] = [
  ["File", 18, "ml-[19px]"], ["Home", 35, "ml-[40px]"], ["Insert", 31, "ml-[29px]"], ["Page Layout", 67, "ml-[30px]"], ["Formulas", 51, "ml-[31px]"],
  ["Data", 24, "ml-[30px]"], ["Review", 38, "ml-[31px]"], ["View", 26, "ml-[30px]"], ["Developer", 55, "ml-[31px]"], ["Results Connect", 88, "ml-[30px]"],
];
const COLS: [string, string][] = [
  ["A", "w-[77px]"], ["B", "w-[77px]"], ["C", "w-[76px]"], ["D", "w-[78px]"], ["E", "w-[76.500px]"], ["F", "w-[77px]"], ["G", "w-[77px]"], ["H", "w-[82px]"], ["I", "w-[89.500px]"], ["", "w-[13px]"],
];
const ROWS = [17.5, 18, 17.5, 17.5, 18, 17.5, 17.5, 18, 29, 29, 24, 24, 24.3, 24, 23.7, 24, 24, 23.7, 29, 29.3, 24, 24, 30, 29, 24];

const Sub = ({ children }: Kids) => <span className="relative top-[5px] text-[11px]">{children}</span>;

type CalcRow = { h: number; label: React.ReactNode; lw: number; val?: string; vw?: number; color?: string; unit?: React.ReactNode; uw?: number; extra?: string };
const BLUE = "text-[#2a80cc]";
const CALC: CalcRow[] = [
  { h: 24.3, label: "Column shape:", lw: 107, val: "Rectangul", vw: 70, color: BLUE },
  { h: 24, label: "Width, b =", lw: 70, unit: "mm", uw: 28 },
  { h: 23.7, label: "Depth, h =", lw: 70, val: "900", vw: 27, color: BLUE, unit: "mm", uw: 28 },
  { h: 24, label: "Column height, L =", lw: 134, val: "3.5", vw: 22, color: BLUE, unit: "m", uw: 13 },
  { h: 24, label: "a =", lw: 21, val: "45.5", vw: 31, color: BLUE, unit: "mm", uw: 28, extra: "(Concrete cover + stirrups + half of main bar)" },
  { h: 23.7, label: "Mix Name =", lw: 86, val: "C32/40", vw: 53, color: BLUE },
  { h: 29, label: <>f<Sub>ck</Sub> =</>, lw: 29, val: "32", vw: 18, unit: "MPa", uw: 32 },
  { h: 29.3, label: <>f<Sub>cu</Sub> =</>, lw: 30, val: "40", vw: 18, unit: "MPa", uw: 32 },
  { h: 24, label: "Bar diameter =", lw: 106, val: "16", vw: 18, color: BLUE },
  { h: 24, label: "Number of bars =", lw: 126, val: "6", vw: 9, color: BLUE },
  { h: 30, label: <>Rebar area, A<Sub>s</Sub> =</>, lw: 114, val: "1206", vw: 36, color: "text-[#22b150]", unit: <>mm<span className="relative -top-[8px] text-[12px]">2</span></>, uw: 34 },
  { h: 29, label: <>f<Sub>yk</Sub>=</>, lw: 26, val: "450", vw: 28, color: BLUE, unit: "MPa", uw: 32 },
  { h: 24, label: "", lw: 1, val: "0.45", vw: 31, color: BLUE },
];

function Logo() {
  return (
    <svg className="ml-[35px] mt-[15px]" width="97" height="76" viewBox="236 350 291 228" fill="#fff" stroke="#1f9128" strokeWidth="5" strokeLinejoin="round">
      <path d="M299 353l61 32v66l-61 34-60-32v-68z" /><path d="M239 385l60 33 61-33M299 418v67" />
      <path d="M334 428h69l32 56-32 57h-69l-34-57z" fill="#c6c6c6" /><path d="M334 428l34 56-34 57M368 484h67" />
      <path d="M461 442l61 33v66l-61 32-59-32v-66z" /><path d="M461 442v66l-59 33M461 508l61 33" />
    </svg>
  );
}

function Under({ children }: Kids) {
  return <div className="flex h-[35.400px] items-end border-b border-[#111]">{children}</div>;
}

function Calcs() {
  return (
    <div className="relative flex w-[723px] flex-col overflow-hidden bg-[#fefefe] text-[#222]">
      <div className="flex h-[169.500px] shrink-0">
        <div className="flex w-[230px] shrink-0 flex-col">
          <Logo />
          <Fit w={77} className="ml-[67px] mt-[3px] text-[16px] font-bold leading-[20px] text-black">Excel Crib</Fit>
          <Fit w={125} className="ml-[43px] text-[15px] leading-[19px] text-[#1f78c4] [&>span]:underline">excelcrib@gmail.com</Fit>
          <Fit w={102} className="ml-[54px] text-[13px] leading-[16px] text-[#1f78c4] [&>span]:underline">www.excelcrib.com</Fit>
        </div>
        <div className="flex w-[154px] shrink-0 flex-col pl-[3px] text-[12.500px] leading-[16px]">
          <div className="flex h-[35.400px] items-end"><Fit w={66} className="-mb-px">PROJECT No.</Fit></div>
          <div className="flex h-[35.400px] items-end"><Fit w={80}>PROJECT NAME</Fit></div>
          <div className="flex h-[35.400px] items-end"><Fit w={49}>ELEMENT</Fit></div>
          <div className="flex h-[35.400px] items-end"><Fit w={58}>DESIGN BY</Fit></div>
        </div>
        <div className="flex w-[326px] shrink-0 flex-col text-[12.500px] leading-[16px] text-[#2a80cc]">
          <Under><div className="flex w-[157px] justify-center pl-[1px]"><Fit w={90}>345326-MU-0124</Fit></div><Fit w={55} className="text-[#222]">SHEET No.</Fit><div className="flex flex-1 justify-center pl-[26px]"><Fit w={6}>1</Fit></div></Under>
          <Under><div className="flex w-full justify-center pl-[2px]"><Fit w={78}>Knightsbridge</Fit></div></Under>
          <Under><div className="flex w-full justify-center pl-px"><Fit w={209}>Fire Reistance of Column  at Grid B14</Fit></div></Under>
          <Under><div className="flex w-[157px] justify-center"><Fit w={53}>Excel Crib</Fit></div><Fit w={28} className="text-[#222]">DATE</Fit><svg className="mb-[12px] ml-[52px]" width="5" height="5" viewBox="0 0 5 5"><path d="M0 0h5L0 5z" fill="#118822" /></svg><Fit w={51} className="ml-[14px]">19-Oct-18</Fit></Under>
        </div>
      </div>
      <div className="flex h-[31px] w-[711px] shrink-0 border-2 border-l-0 border-black text-[12.500px] leading-[16px]">
        <div className="flex w-[539px] items-center border-r-2 border-black pl-[225px] pt-[2px]"><Fit w={88}>DESIGN / NOTES</Fit></div>
        <div className="flex flex-1 items-center justify-center pt-[2px]"><Fit w={71}>REF / ACTION</Fit></div>
      </div>
      <div className="flex w-[711px] flex-1 shrink-0 flex-col border-r-2 border-black">
        <div className="flex h-[47px] shrink-0 pl-[3px]"><Fit w={256} className="mt-[1px] text-[15px] italic leading-[22px]">Reference: BS EN 1992-1-2 clause 5.3.2(4)</Fit></div>
        {CALC.map((r, i) => (
          <div key={i} className="flex shrink-0 items-center pt-[2px] text-[17px] leading-[20px]" style={{ height: r.h }}>
            <div className="flex w-[227px] shrink-0 justify-end"><Fit w={r.lw}>{r.label}</Fit></div>
            <div className={"flex w-[79px] shrink-0 justify-center pl-[5px] " + (r.color ?? "")}>{r.val && <Fit w={r.vw!}>{r.val}</Fit>}</div>
            <div className="flex items-center gap-[4px] pl-[6px]">
              {r.unit && <Fit w={r.uw!}>{r.unit}</Fit>}
              {r.extra && <Fit w={258} className="text-[14px]">{r.extra}</Fit>}
            </div>
          </div>
        ))}
      </div>
      <div className="absolute left-[229px] top-[246px] h-[26px] w-[80px] border-2 border-[#217346]" />
      <svg className="absolute left-[231px] top-[497px]" width="5" height="5" viewBox="0 0 5 5"><path d="M0 0h5L0 5z" fill="#118822" /></svg>
      <svg className="absolute left-[302px] top-[497px]" width="5" height="5" viewBox="0 0 5 5"><path d="M0 0h5v5z" fill="#e01818" /></svg>
      <div className="absolute left-[308px] top-[252px] flex h-[18px] w-[18px] items-center justify-center border border-[#aaa] bg-[#e6e6e6]"><Caret className="text-[#666]" /></div>
      <div className="absolute left-[182px] top-[271px] flex h-[33px] w-[144px] flex-col border border-[#111] bg-white text-[14px] leading-[15px]">
        <div className="flex h-[16px] items-center pl-[6px]"><Fit w={66}>Rectangular</Fit></div>
        <div className="flex h-[15px] items-center bg-[#3399ff] pl-[6px] text-white"><Fit w={42}>Circular</Fit></div>
      </div>
      <Cursor className="absolute left-[229px] top-[296px]" />
      <div className="absolute left-[320px] top-[562px] h-[20px] w-[374px] border border-[#bbb] bg-white" />
    </div>
  );
}

function Excel() {
  return (
    <section className="flex h-[686px] w-[756px] shrink-0 flex-col overflow-hidden bg-[#e6e7e7] font-['Lato',sans-serif]">
      <div className="flex h-[26px] shrink-0 bg-[#217346] font-['Open_Sans',sans-serif] text-[13px] leading-[13px] text-[#eef5f0]">
        {XTABS.map(([t, w, m]) => <Fit key={t} w={w} className={m}>{t}</Fit>)}
      </div>
      <div className="flex h-[46px] shrink-0 items-start pl-[3px] pt-[10px] font-['Open_Sans',sans-serif] text-[14px] text-[#555]">
        <div className="flex h-[27px] w-[106px] items-center justify-between border border-[#c8c8c8] bg-white pl-[6px] pr-[6px]"><Fit w={24}>D13</Fit><Caret className="text-[#777]" /></div>
        <div className="ml-[15px] mt-[8px] h-[12px] w-0 border-l-2 border-dotted border-[#aaa]" />
        <div className="ml-[14px] flex h-[27px] w-[115px] items-center border border-[#c8c8c8] bg-white">
          <svg className="ml-[13px]" width="12" height="11" viewBox="0 0 12 11" stroke="#bbb" strokeWidth="1.600"><path d="M1 1l10 9M11 1L1 10" /></svg>
          <svg className="ml-[26px]" width="14" height="11" viewBox="0 0 14 11" stroke="#bbb" strokeWidth="2.500" fill="none"><path d="M1 6l4 4 8-9" /></svg>
          <span className="ml-[24px] font-['Liberation_Serif',serif] text-[17px] italic leading-[20px]">f<span className="text-[12px] font-bold">x</span></span>
        </div>
        <div className="ml-[3px] flex h-[27px] flex-1 items-center border border-r-0 border-[#c8c8c8] bg-white pl-[12px] text-[#444]"><Fit w={75}>Rectangular</Fit></div>
      </div>
      <div className="flex h-[25px] shrink-0 border-b border-[#aaa] font-['Open_Sans',sans-serif] text-[15px] text-[#333]">
        <div className="flex w-[33px] shrink-0 items-end justify-end border-r border-[#aaa] pb-[4px] pr-[3px]"><svg width="15" height="15" viewBox="0 0 15 15"><path d="M15 0v15H0z" fill="#b6b6b6" /></svg></div>
        {COLS.map(([c, w]) => (
          <div key={c} className={"flex shrink-0 items-center justify-center pl-[2px] " + w + (c === "D" ? " border-b-2 border-[#217346] bg-[#d2d2d2] pt-[2px] text-[#217346]" : " border-r border-[#b4b4b4]")}>{c}</div>
        ))}
      </div>
      <div className="flex h-[569px] shrink-0 overflow-hidden">
        <div className="flex w-[33px] shrink-0 flex-col border-r border-[#999] text-[17px] leading-[17px] text-[#333]">
          {ROWS.map((h, i) => (
            <div key={i} className={"flex shrink-0 items-center justify-center border-b border-[#b4b4b4] " + (i === 12 ? "border-r-2 border-r-[#217346] bg-[#d2d2d2] text-[#217346] " : "") + (i === 8 || i === 9 ? "pt-[7px]" : i > 9 ? "pt-[2px]" : "")} style={{ height: h }}>{i + 1}</div>
          ))}
        </div>
        <Calcs />
      </div>
      <div className="flex h-[20px] shrink-0 items-stretch border-t border-[#aaa] text-[15px] leading-[18px] text-[#444]">
        <div className="flex w-[102px] items-center border-r border-[#aaa] pl-[26px] pt-[6px]">
          <svg width="4" height="7" viewBox="0 0 4 7"><path d="M4 0v7L0 3.500z" fill="#bbb" /></svg>
          <svg className="ml-[26px]" width="4" height="7" viewBox="0 0 4 7"><path d="M0 0v7l4-3.500z" fill="#bbb" /></svg>
        </div>
        <div className="flex w-[57px] items-center justify-center border-r border-[#aaa] bg-white pt-[4px] font-bold text-[#217346]"><Fit w={33}>Calcs</Fit></div>
        <div className="flex w-[60px] items-center justify-center border-r border-[#aaa] pt-[4px]"><Fit w={33}>Table</Fit></div>
        <svg className="ml-[34px] mt-[5px]" width="17" height="17" viewBox="0 0 17 17" fill="none" stroke="#666"><circle cx="8.500" cy="8.500" r="7.500" /><path d="M4.500 8.500h8M8.500 4.500v8" strokeWidth="2" /></svg>
      </div>
    </section>
  );
}

function RevitLogo() {
  return (
    <svg className="shrink-0" width="122" height="131" viewBox="0 0 122 131" fontFamily="Open Sans" fontWeight="700" fill="#fff">
      <path d="M11 20h111v110H15q-4 0-4-4z" fill="#0d3b91" />
      <path d="M0 12L20 0v92L0 104z" fill="#6b9eec" />
      <path d="M20 0h88q5 0 5 5v87H20z" fill="#186bff" />
      <text x="44" y="72" fontSize="72" textLength="46" lengthAdjust="spacingAndGlyphs" stroke="#fff" strokeWidth="1">R</text>
      <text x="41" y="120" fontSize="27" textLength="51" lengthAdjust="spacingAndGlyphs">RVT</text>
    </svg>
  );
}

function ExcelLogo() {
  return (
    <svg className="shrink-0" width="141" height="131" viewBox="0 0 141 131">
      <defs>
        <linearGradient id="badge" x1="0" y1="0" x2="1" y2="1"><stop offset="0" stopColor="#18884f" /><stop offset="1" stopColor="#0b6631" /></linearGradient>
        <clipPath id="sheet"><rect x="33" y="0" width="108" height="131" rx="5" /></clipPath>
        <filter id="soft" x="-20%" y="-20%" width="140%" height="140%"><feGaussianBlur stdDeviation="2" /></filter>
      </defs>
      <g clipPath="url(#sheet)">
        <path d="M33 0h108v131H33z" fill="#185c37" />
        <path d="M33 0h55v33H33zM88 33h53v32H88z" fill="#21a366" />
        <path d="M88 0h53v33H88z" fill="#33c481" />
        <path d="M33 33h55v32H33zM88 65h53v33H88z" fill="#107c41" />
        <path d="M33 27h38q5 0 5 5v74q0 5-5 5H33z" fill="#000" opacity=".12" />
        <rect x="4" y="32" width="70" height="73" rx="5" fill="#000" opacity=".4" filter="url(#soft)" />
      </g>
      <rect x="0" y="29" width="72" height="73" rx="5" fill="url(#badge)" />
      <text x="18" y="85" fontFamily="Open Sans" fontWeight="700" fontSize="54" textLength="36" lengthAdjust="spacingAndGlyphs" fill="#fff">X</text>
    </svg>
  );
}

export default function App() {
  return (
    <main className="flex h-[1200px] w-[2387px] flex-col overflow-hidden bg-white pt-[144px]">
      <div className="flex justify-between">
        <Revit />
        <Excel />
      </div>
      <div className="mt-[63px] flex items-center font-['Inter',sans-serif] text-[46px] font-bold leading-[56px] text-black">
        <Fit w={369} className="-mt-[12px] ml-[793px]">Door Schedule</Fit>
        <div className="ml-[74px]"><RevitLogo /></div>
        <div className="ml-[241px]"><ExcelLogo /></div>
        <Fit w={376} className="-mt-[12px] ml-[76px]">City Fire Codes</Fit>
      </div>
    </main>
  );
}
